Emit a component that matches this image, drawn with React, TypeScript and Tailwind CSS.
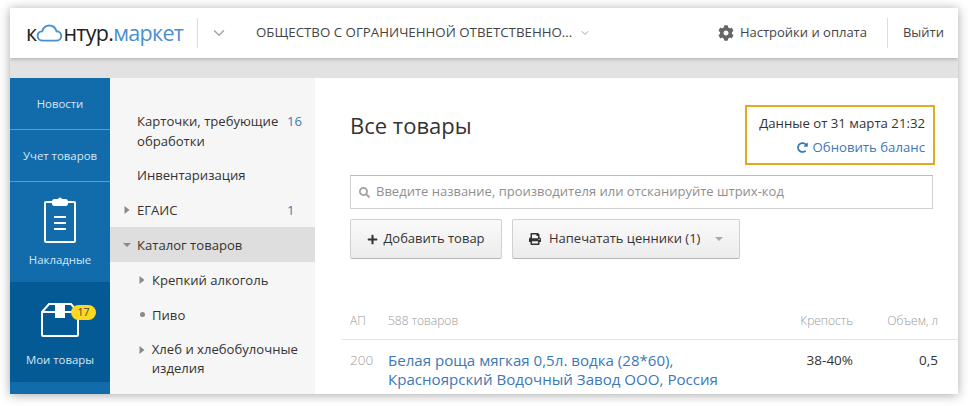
import React from 'react';
import { ChevronDown } from 'lucide-react';
import { FaCog, FaRedoAlt, FaSearch, FaPlus, FaPrint } from 'react-icons/fa';

const font = "font-['Open_Sans','Noto_Sans',sans-serif]";

const Caret = ({ open = false }: { open?: boolean }) => (
  <svg width="8" height="10" viewBox="0 0 8 10" className="shrink-0 text-[#8a8a8a]">
    {open ? <path d="M0 3h8L4 7z" fill="currentColor" /> : <path d="M1.5 1l5 4-5 4z" fill="currentColor" />}
  </svg>
);

const Cloud = () => (
  <svg width="27" height="19" viewBox="0 0 28 20" fill="none" className="mt-[1px] shrink-0">
    <path
      d="M7 17.5C3.8 17.5 1.5 15.4 1.5 12.6 1.5 10 3.5 8 6.2 7.8 7.4 4 10.3 1.6 13.8 1.6c3.5 0 6.4 2.4 7.6 6 2.8.1 5 2.2 5 4.9 0 2.8-2.3 5-5.5 5z"
      stroke="#4a90d0"
      strokeWidth="2"
    />
  </svg>
);

const BlueItem = ({ label }: { label: string }) => (
  <div className="flex h-[52px] items-center justify-center border-b border-[#5c9bcb] text-[11.4px] text-[#d5e8f6]">
    {label}
  </div>
);

const MenuRow = ({
  label,
  count,
  caret,
  active,
}: {
  label: React.ReactNode;
  count?: string;
  caret?: React.ReactNode;
  active?: boolean;
}) => (
  <div className={`flex h-[35px] items-center pr-[13px] ${active ? 'bg-[#dedede]' : ''}`}>
    <div className="flex w-[27px] justify-end pr-[6px]">{caret}</div>
    <span className="flex-1">{label}</span>
    {count && <span className="w-[15px] text-[#3c78b4]">{count}</span>}
  </div>
);

export default function App() {
  return (
    <div className={`h-[406px] w-[968px] overflow-hidden bg-white pl-[10px] pt-[8px] ${font}`}>
      <div className="flex h-[386px] w-[948px] flex-col overflow-hidden bg-white shadow-[0_1px_10px_rgba(0,0,0,0.35)]">
        {/* шапка */}
        <header className="relative z-10 flex h-[50px] shrink-0 items-center bg-white text-[13px] text-[#444] shadow-[0_1px_4px_rgba(0,0,0,0.25)]">
          <div className="flex w-[187px] items-center pl-4 text-[21.5px] leading-none tracking-[-0.7px] text-[#222]">
            <span>к</span>
            <Cloud />
            <span>нтур.</span>
            <span className="text-[#4a90d0]">маркет</span>
          </div>
          <div className="h-[30px] w-px bg-[#dcdcdc]" />
          <ChevronDown size={18} className="ml-[12px] text-[#a6a6a6]" />
          <span className="ml-[28px] whitespace-nowrap text-[13.3px]">ОБЩЕСТВО С ОГРАНИЧЕННОЙ ОТВЕТСТВЕННО...</span>
          <ChevronDown size={12} className="ml-[7px] text-[#a6a6a6]" />
          <div className="ml-auto flex items-center">
            <FaCog size={16} className="mr-[6px] text-[#666]" />
            <span>Настройки и оплата</span>
            <div className="ml-[20px] h-[30px] w-px bg-[#dcdcdc]" />
            <span className="ml-[15px] mr-[14px]">Выйти</span>
          </div>
        </header>
        <div className="h-5 shrink-0 bg-[#e2e2e2]" />

        <div className="flex min-h-0 flex-1">
          {/* синяя колонка */}
          <nav className="w-[100px] shrink-0 bg-[#126bab]">
            <BlueItem label="Новости" />
            <BlueItem label="Учет товаров" />
            <div className="flex h-[100px] flex-col items-center pt-[15px] text-[11.4px] text-[#d5e8f6]">
              <svg width="32" height="46" viewBox="0 0 32 46" fill="none" stroke="#fff" strokeWidth="2">
                <rect x="1" y="5" width="30" height="40" rx="1" />
                <rect x="9" y="3" width="14" height="5" rx="1.5" fill="#fff" />
                <circle cx="16" cy="2.5" r="2" fill="#fff" stroke="none" />
                <path d="M10 20h12M10 26h12M10 32h12" />
              </svg>
              <span className="mt-[8px]">Накладные</span>
            </div>
            <div className="flex h-[100px] flex-col items-center bg-[#045a94] pt-[21px] text-[11.4px] text-[#d5e8f6]">
              <div className="relative h-[34px] w-[38px]">
                <svg width="38" height="34" viewBox="0 0 38 34" fill="none" stroke="#fff" strokeWidth="2">
                  <path d="M1 9L8 1h22l7 8v23a1 1 0 0 1-1 1H2a1 1 0 0 1-1-1z" />
                  <path d="M1 9h36" />
                  <rect x="14" y="0" width="10" height="15" fill="#fff" stroke="none" />
                </svg>
                <span className="absolute left-[30px] top-[2px] flex h-[15px] w-[25px] items-center justify-center rounded-full bg-[#fdd81f] text-[10.5px] text-[#444]">
                  17
                </span>
              </div>
              <span className="mt-[14px]">Мои товары</span>
            </div>
            <div className="h-[12px]" />
          </nav>

          {/* меню */}
          <aside className="w-[205px] shrink-0 bg-[#f6f6f6] pt-[33px] text-[13.1px] leading-[20px] text-[#333]">
            <div className="flex pl-[27px] pr-[13px]">
              <span className="flex-1">Карточки, требующие обработки</span>
              <span className="text-[#3c78b4]">16</span>
            </div>
            <div className="mt-[6px]">
              <MenuRow label="Инвентаризация" />
              <MenuRow label="ЕГАИС" count="1" caret={<Caret />} />
              <MenuRow label="Каталог товаров" caret={<Caret open />} active />
            </div>
            <div className="pl-[15px]">
              <MenuRow label="Крепкий алкоголь" caret={<Caret />} />
              <MenuRow
                label="Пиво"
                caret={<span className="mr-[1px] h-[5px] w-[5px] rounded-full bg-[#8a8a8a]" />}
              />
              <div className="flex pt-[8px]">
                <div className="flex h-5 w-[27px] items-center justify-end pr-[6px]">
                  <Caret />
                </div>
                <span className="w-[165px] leading-[19px]">Хлеб и хлебобулочные изделия</span>
              </div>
            </div>
          </aside>

          {/* контент */}
          <main className="min-w-0 flex-1 pl-[35px] pr-[25px]">
            <div className="flex h-[97px] items-start justify-between pt-[27px]">
              <h1 className="pt-[5px] text-[22px] leading-[30px] text-[#333]">Все товары</h1>
              <div className="-mr-[2px] flex h-[60px] w-[190px] flex-col items-end justify-center border-2 border-[#e5a823] pr-[8px] text-[13.2px] leading-[24px] text-[#333]">
                <span>Данные от 31 марта 21:32</span>
                <span className="flex items-center text-[#3c78b4]">
                  <FaRedoAlt size={11} className="mr-[5px]" />
                  Обновить баланс
                </span>
              </div>
            </div>
            <div className="flex h-[34px] items-center border border-[#d0d0d0] border-t-[#bbb] pl-[8px] text-[13px] text-[#8f8f8f]">
              <FaSearch size={11} className="mr-[6px] text-[#a0a0a0]" />
              Введите название, производителя или отсканируйте штрих-код
            </div>
            <div className="mt-[10px] flex gap-[10px] text-[13px] text-[#333]">
              <button className="flex h-[40px] w-[152px] items-center justify-center rounded-[2px] border border-[#d0d0d0] border-b-[#b5b5b5] bg-gradient-to-b from-[#fafafa] to-[#ececec]">
                <FaPlus size={11} className="mr-[5px]" />
                Добавить товар
              </button>
              <button className="flex h-[40px] w-[228px] items-center rounded-[2px] border border-[#d0d0d0] border-b-[#b5b5b5] bg-gradient-to-b from-[#fafafa] to-[#ececec] pl-[16px]">
                <FaPrint size={12} className="mr-[8px]" />
                Напечатать ценники (1)
                <span className="ml-[15px] h-0 w-0 border-x-[4px] border-t-[4px] border-x-transparent border-t-[#aaa]" />
              </button>
            </div>
            <div className="-ml-[8px] -mr-[25px] mt-[41px] flex h-[40px] items-center border-b border-[#e2e2e2] pr-[20px] pt-[2px] text-[12px] font-light text-[#999]">
              <span className="ml-[8px] w-[38px]">АП</span>
              <span className="flex-1">588 товаров</span>
              <span className="w-[70px] text-right">Крепость</span>
              <span className="w-[85px] text-right">Объем, л</span>
            </div>
            <div className="-ml-[8px] -mr-[25px] flex pr-[20px] pt-[11px] text-[13.5px] leading-[19px]">
              <span className="ml-[8px] w-[38px] font-light text-[#999]">200</span>
              <span className="flex-1 text-[15.1px] text-[#3c78b4]">
                Белая роща мягкая 0,5л. водка (28*60),
                <br />
                Красноярский Водочный Завод ООО, Россия
              </span>
              <span className="w-[70px] text-right text-[#333]">38-40%</span>
              <span className="w-[85px] text-right text-[#333]">0,5</span>
            </div>
          </main>
        </div>
      </div>
    </div>
  );
}
